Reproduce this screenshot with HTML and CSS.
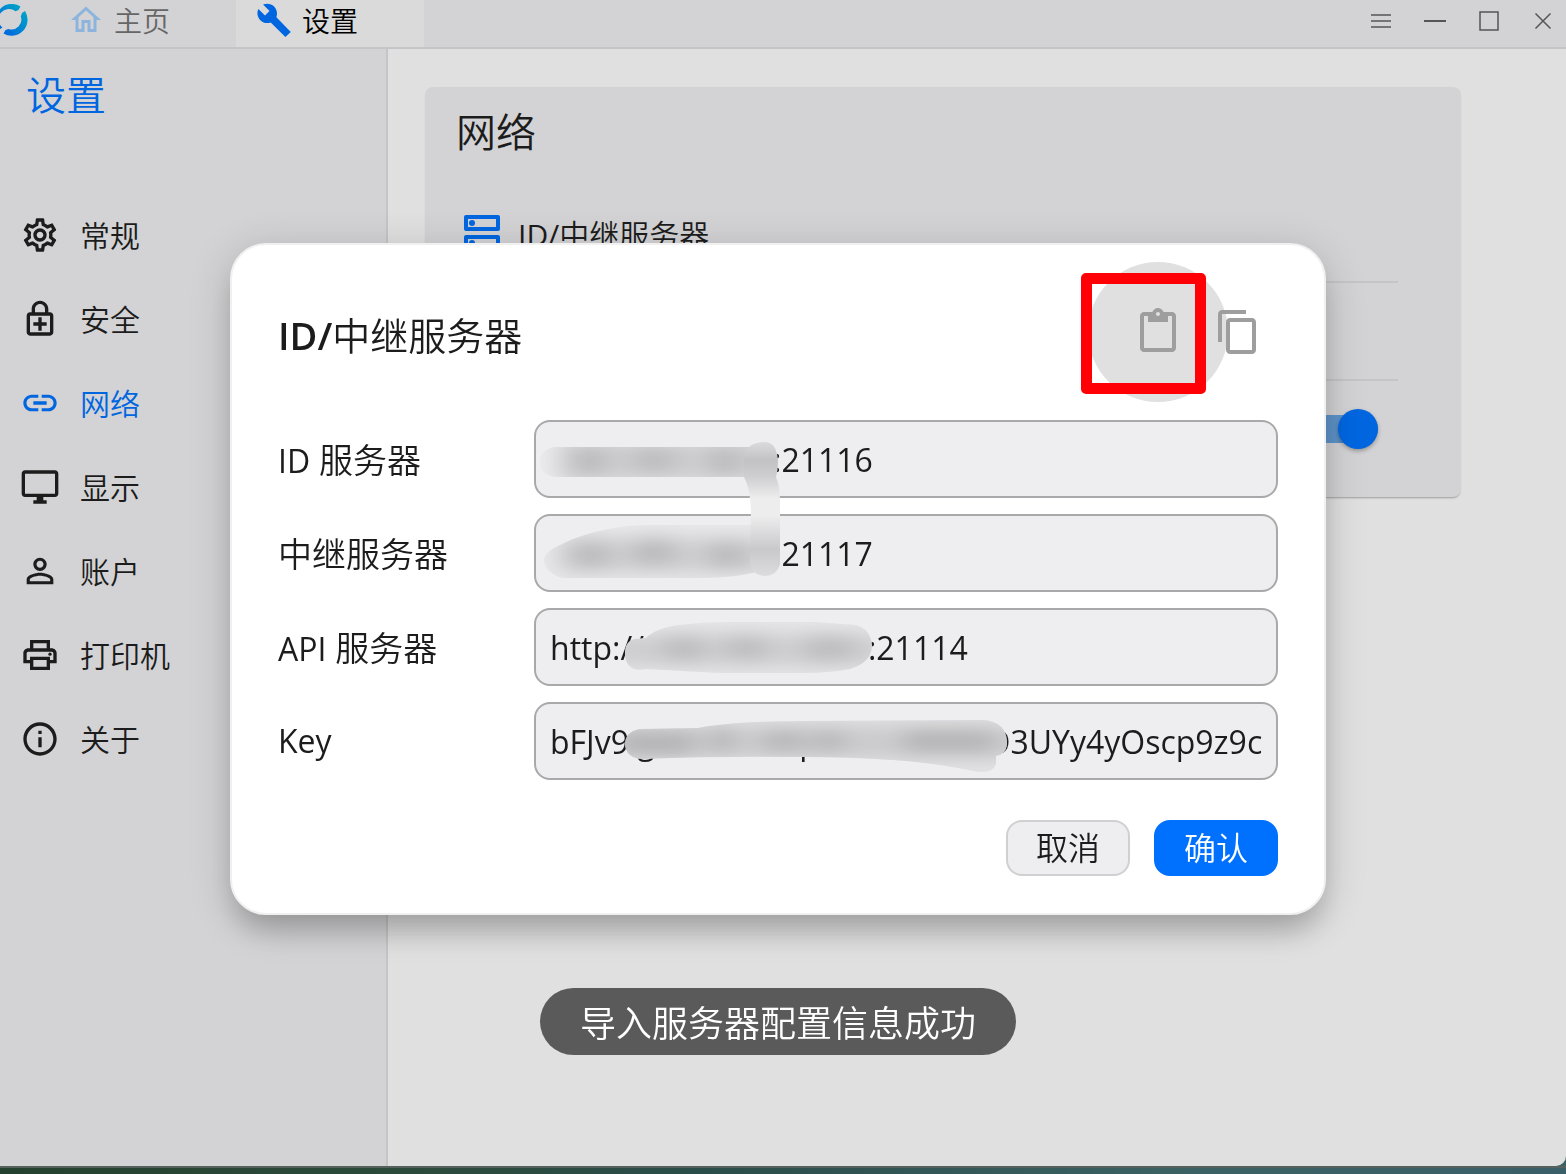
FILE: index.html
```html
<!DOCTYPE html>
<html lang="zh-CN">
<head>
<meta charset="utf-8">
<meta name="viewport" content="width=device-width, initial-scale=1">
<title>设置</title>
<link rel="stylesheet" href="styles.css">
</head>
<body>
<div class="window">
  <header class="titlebar">
    <svg class="logo" viewBox="0 0 32 32" aria-hidden="true">
      <defs>
        <linearGradient id="logoFill" x1="0" y1="1" x2="1" y2="0">
          <stop offset="0.15" stop-color="#0066e0"/>
          <stop offset="0.9" stop-color="#00a8c4"/>
        </linearGradient>
      </defs>
      <path fill="url(#logoFill)" d="M24.500 2.500A16 16 0 0 0 3 25.500L6.500 23.500A9.800 9.800 0 0 1 19.500 7.200L22.500 6ZM29 7A16 16 0 0 1 7.500 29.500L9.500 26L12.500 25A9.800 9.800 0 0 0 24.800 12.500L26 9Z"/>
    </svg>
    <nav class="tabs" aria-label="标签页">
      <a class="tab" href="#home">
        <svg class="tab-icon" viewBox="0 0 24 24"><path d="M12 5.690l5 4.500V18h-2v-6H9v6H7v-7.810l5-4.500M12 3L2 12h3v8h6v-6h2v6h6v-8h3L12 3z"/></svg>
        <span>主页</span>
      </a>
      <a class="tab tab-active" href="#settings">
        <svg class="tab-icon" viewBox="0 0 24 24"><path d="M23.200 20l-9.600-9.800c.9-2.300.4-5.300-1.500-7.200-2-2-5-2.400-7.400-1.300L9 6 6 9 1.600 4.700C.4 7.100.9 10.100 2.900 12.100c1.900 1.900 4.600 2.400 6.900 1.500l9.800 9.800z"/></svg>
        <span>设置</span>
      </a>
    </nav>
    <div class="window-controls">
      <button type="button" aria-label="菜单"><svg viewBox="0 0 22 22"><path d="M1 5h20M1 11h20M1 17h20"/></svg></button>
      <button type="button" aria-label="最小化"><svg viewBox="0 0 22 22"><path stroke-width="2" d="M0 11h22"/></svg></button>
      <button type="button" aria-label="最大化"><svg viewBox="0 0 22 22"><path d="M2 2h18v18H2z"/></svg></button>
      <button type="button" aria-label="关闭"><svg viewBox="0 0 22 22"><path d="M3.500 3.500l15 15M18.500 3.500l-15 15"/></svg></button>
    </div>
  </header>

  <div class="workspace">
    <aside class="sidebar">
      <h1>设置</h1>
      <nav class="menu" aria-label="设置分类">
        <a href="#general"><svg viewBox="0 0 24 24"><path d="M19.430 12.980c.04-.32.07-.64.07-.98 0-.34-.03-.66-.07-.98l2.110-1.650c.19-.15.24-.42.12-.64l-2-3.460c-.09-.16-.26-.25-.44-.25-.06 0-.12.01-.17.03l-2.490 1c-.52-.4-1.080-.73-1.690-.98l-.38-2.650C14.460 2.180 14.250 2 14 2h-4c-.25 0-.46.18-.49.42l-.38 2.650c-.61.25-1.170.59-1.690.98l-2.490-1c-.06-.02-.12-.03-.18-.03-.17 0-.34.09-.43.25l-2 3.460c-.13.22-.07.49.12.64l2.110 1.650c-.04.32-.07.65-.07.98 0 .33.03.66.07.98l-2.110 1.650c-.19.15-.24.42-.12.64l2 3.460c.09.16.26.25.44.25.06 0 .12-.01.17-.03l2.490-1c.52.4 1.080.73 1.690.98l.38 2.650c.03.24.24.42.49.42h4c.25 0 .46-.18.49-.42l.38-2.650c.61-.25 1.170-.59 1.690-.98l2.490 1c.06.02.12.03.18.03.17 0 .34-.09.43-.25l2-3.460c.12-.22.07-.49-.12-.64l-2.110-1.650zm-1.980-1.710c.04.31.05.52.05.73 0 .21-.02.43-.05.73l-.14 1.130.89.7 1.080.84-.7 1.210-1.270-.51-1.040-.42-.9.68c-.43.32-.84.56-1.250.73l-1.060.43-.16 1.130-.2 1.350h-1.400l-.19-1.350-.16-1.130-1.060-.43c-.43-.18-.83-.41-1.230-.71l-.91-.7-1.060.43-1.270.51-.7-1.210 1.080-.84.89-.7-.14-1.130c-.03-.31-.05-.54-.05-.74s.02-.43.05-.73l.14-1.130-.89-.7-1.080-.84.7-1.210 1.270.51 1.040.42.9-.68c.43-.32.84-.56 1.250-.73l1.060-.43.16-1.130.2-1.350h1.390l.19 1.350.16 1.130 1.060.43c.43.18.83.41 1.230.71l.91.7 1.060-.43 1.270-.51.7 1.210-1.070.85-.89.7.14 1.130zM12 8c-2.210 0-4 1.790-4 4s1.790 4 4 4 4-1.790 4-4-1.790-4-4-4zm0 6c-1.100 0-2-.9-2-2s.9-2 2-2 2 .9 2 2-.9 2-2 2z"/></svg><span>常规</span></a>
        <a href="#security"><svg viewBox="0 0 24 24"><path d="M18 8h-1V6c0-2.760-2.240-5-5-5S7 3.240 7 6v2H6c-1.100 0-2 .9-2 2v10c0 1.100.9 2 2 2h12c1.100 0 2-.9 2-2V10c0-1.100-.9-2-2-2zM9 6c0-1.660 1.340-3 3-3s3 1.340 3 3v2H9V6zm9 14H6V10h12v10zM11 19v-3H8v-2h3v-3h2v3h3v2h-3v3z"/></svg><span>安全</span></a>
        <a class="current" href="#network" aria-current="page"><svg viewBox="0 0 24 24"><path d="M3.900 12c0-1.710 1.390-3.100 3.100-3.100h4V7H7c-2.760 0-5 2.240-5 5s2.240 5 5 5h4v-1.900H7c-1.710 0-3.100-1.390-3.100-3.100zM8 13h8v-2H8v2zm9-6h-4v1.900h4c1.710 0 3.100 1.390 3.100 3.100s-1.390 3.100-3.100 3.100h-4V17h4c2.760 0 5-2.240 5-5s-2.240-5-5-5z"/></svg><span>网络</span></a>
        <a href="#display"><svg viewBox="0 0 24 24"><path d="M21 2H3c-1.100 0-2 .9-2 2v12c0 1.100.9 2 2 2h7v2H8v2h8v-2h-2v-2h7c1.100 0 2-.9 2-2V4c0-1.100-.9-2-2-2zm0 14H3V4h18v12z"/></svg><span>显示</span></a>
        <a href="#account"><svg viewBox="0 0 24 24"><path d="M12 5.900c1.160 0 2.100.94 2.100 2.100s-.94 2.100-2.100 2.100S9.900 9.160 9.900 8s.94-2.100 2.100-2.100m0 9c2.970 0 6.100 1.460 6.100 2.100v1.100H5.900V17c0-.64 3.130-2.100 6.100-2.100M12 4C9.790 4 8 5.790 8 8s1.790 4 4 4 4-1.790 4-4-1.790-4-4-4zm0 9c-2.670 0-8 1.340-8 4v3h16v-3c0-2.660-5.330-4-8-4z"/></svg><span>账户</span></a>
        <a href="#printer"><svg viewBox="0 0 24 24"><path d="M19 8h-1V3H6v5H5c-1.660 0-3 1.340-3 3v6h4v4h12v-4h4v-6c0-1.660-1.340-3-3-3zM8 5h8v3H8V5zm8 12v2H8v-4h8v2zm2-2v-2H6v2H4v-4c0-.55.45-1 1-1h14c.55 0 1 .45 1 1v4h-2z"/><circle cx="18" cy="11.500" r="1"/></svg><span>打印机</span></a>
        <a href="#about"><svg viewBox="0 0 24 24"><path d="M11 7h2v2h-2zm0 4h2v6h-2zm1-9C6.480 2 2 6.480 2 12s4.480 10 10 10 10-4.480 10-10S17.520 2 12 2zm0 18c-4.410 0-8-3.590-8-8s3.590-8 8-8 8 3.590 8 8-3.590 8-8 8z"/></svg><span>关于</span></a>
      </nav>
    </aside>

    <main class="content">
      <section class="card">
        <h2>网络</h2>
        <ul class="options">
          <li>
            <svg class="option-icon" viewBox="0 0 24 24"><path fill-rule="evenodd" d="M4 3h16a1 1 0 0 1 1 1v6a1 1 0 0 1-1 1H4a1 1 0 0 1-1-1V4a1 1 0 0 1 1-1zM5 5v4h14V5zM4 13h16a1 1 0 0 1 1 1v6a1 1 0 0 1-1 1H4a1 1 0 0 1-1-1v-6a1 1 0 0 1 1-1zM5 15v4h14v-4z"/><circle cx="7" cy="7" r="1.500"/><circle cx="7" cy="17" r="1.500"/></svg>
            <span><span class="latin">ID/</span>中继服务器</span>
          </li>
          <li></li>
          <li><input class="switch" type="checkbox" role="switch" aria-label="启用" checked></li>
        </ul>
      </section>
    </main>
  </div>
</div>
<div class="desktop-edge"></div>

<div class="overlay">
  <form class="dialog" role="dialog" aria-labelledby="dialogTitle">
    <div class="dialog-head">
      <h2 id="dialogTitle"><b>ID/</b>中继服务器</h2>
      <div class="dialog-tools">
        <button class="tool tool-pressed" type="button" aria-label="粘贴">
          <svg viewBox="0 0 24 24"><path d="M19 2h-4.180C14.400.84 13.300 0 12 0c-1.300 0-2.400.84-2.820 2H5c-1.100 0-2 .9-2 2v16c0 1.100.9 2 2 2h14c1.100 0 2-.9 2-2V4c0-1.100-.9-2-2-2zm-7 0c.55 0 1 .45 1 1s-.45 1-1 1-1-.45-1-1 .45-1 1-1zm7 18H5V4h2v3h10V4h2v16z"/></svg>
          <span class="marker"></span>
        </button>
        <button class="tool" type="button" aria-label="复制">
          <svg viewBox="0 0 24 24"><path d="M16 1H4c-1.100 0-2 .9-2 2v14h2V3h12V1zm3 4H8c-1.100 0-2 .9-2 2v14c0 1.100.9 2 2 2h11c1.100 0 2-.9 2-2V7c0-1.100-.9-2-2-2zm0 16H8V7h11v14z"/></svg>
        </button>
      </div>
    </div>

    <div class="fields">
      <label for="idServer"><span class="latin">ID</span> 服务器</label>
      <input class="host-hidden" id="idServer" type="text" value=":21116">
      <label for="relayServer">中继服务器</label>
      <input class="host-hidden" id="relayServer" type="text" value=":21117">
      <label for="apiServer"><span class="latin">API</span> 服务器</label>
      <input id="apiServer" type="text" value="http://&#8195;&#8195;&#8195;&#8195;&#8195;&#8195;&#8195;:21114">
      <label for="key"><span class="latin">Key</span></label>
      <input id="key" type="text" value="bFJv9 g&#8195;&#8195;&#8195;&#8195;  p&#8195;&#8195;&#8195;&#8195;&#8195; D3UYy4yOscp9z9c">
      <svg class="redaction" viewBox="0 0 744 360" aria-hidden="true">
        <defs>
          <filter id="soft" x="-30%" y="-60%" width="160%" height="220%"><feGaussianBlur stdDeviation="12 9"/></filter>
          <linearGradient id="bridge" x1="0" y1="0" x2="0" y2="1">
            <stop offset="0" stop-color="#dadadc"/><stop offset="0.14" stop-color="#c2c2c4"/><stop offset="0.26" stop-color="#cfcfd1"/>
            <stop offset="0.42" stop-color="#ededee"/><stop offset="0.55" stop-color="#ededee"/><stop offset="0.8" stop-color="#c9c9cb"/><stop offset="1" stop-color="#dcdcde"/>
          </linearGradient>
          <clipPath id="c1"><path d="M20 27H216V57H20Q6 54 6 42T20 27Z"/></clipPath>
          <clipPath id="c2"><path d="M10 140Q10 133 22 127Q60 107 110 105H225V151Q205 158 160 158H28Q10 152 10 140Z"/></clipPath>
          <clipPath id="c3"><path d="M91 234Q91 221 101 219L112 218Q122 208 145 205Q170 202 200 202H280L322 205Q337 209 338 226Q337 243 316 249Q295 253 270 253H185L112 249Q92 253 91 234Z"/></clipPath>
          <clipPath id="c4"><path d="M91 324Q92 310 108 309L164 308Q200 301 270 301L450 300Q472 302 473 322Q473 334 462 336V344Q458 356 434 350Q370 337 270 337Q180 336 108 339Q92 338 91 324Z"/></clipPath>
        </defs>
        <g clip-path="url(#c1)"><path fill="#ebebed" d="M0 20h230v45H0z"/><g filter="url(#soft)"><path fill="#cdcdcf" d="M24 20h226v42H24z"/><path fill="#bababc" d="M40 28h32v26H40zM100 30h40v20h-40zM176 28h30v26h-30z"/></g></g>
        <g clip-path="url(#c2)"><path fill="#e8e8ea" d="M0 100h230v60H0z"/><g filter="url(#soft)"><path fill="#cdcdcf" d="M24 118h226v34H24z"/><path fill="#b9b9bb" d="M40 122h34v26H40zM100 118h40v26h-40zM176 122h34v26h-34z"/></g></g>
        <path fill="url(#bridge)" d="M216 26Q222 22 232 22Q243 23 244 42Q244 50 242 57Q246 66 246 82V144Q243 156 230 156Q216 154 216 142L217 90Q216 68 210 57V34Z"/>
        <g clip-path="url(#c3)"><path fill="#e6e6e8" d="M85 200h260v56H85z"/><g filter="url(#soft)"><path fill="#cdcdcf" d="M70 214h280v32H70z"/><path fill="#bbbbbd" d="M130 216h40v24h-40zM192 216h40v22h-40zM272 216h46v24h-46z"/></g></g>
        <g clip-path="url(#c4)"><path fill="#e2e2e4" d="M85 296h400v60H85z"/><g filter="url(#soft)"><path fill="#cacacc" d="M60 306h430v32H60z"/><path fill="#b2b2b4" d="M86 312h74v24H86zM178 308h20v24h-20zM230 312h40v18h-40zM280 312h30v18h-30zM370 310h90v22h-90z"/></g></g>
      </svg>
    </div>

    <div class="actions">
      <button class="btn" type="button">取消</button>
      <button class="btn btn-primary" type="submit">确认</button>
    </div>
  </form>
  <div class="toast" role="status">导入服务器配置信息成功</div>
</div>
</body>
</html>
```
FILE: styles.css
```css
:root {
  --blue: #0066e0;
  --ink: #1c1c1c;
  --panel: #d3d3d5;
  --line: #c5c5c7;
}

* {
  box-sizing: border-box;
}

body {
  margin: 0;
  min-height: 100vh;
  display: flex;
  flex-direction: column;
  background: #3c6163;
  color: var(--ink);
  font-family: "Open Sans", "Noto Sans CJK SC", sans-serif;
  font-weight: 350;
}

h1,
h2 {
  margin: 0;
  font-weight: 350;
}

a {
  color: inherit;
  text-decoration: none;
}

button,
input {
  font: inherit;
  color: inherit;
}

svg {
  display: block;
  flex: none;
  fill: currentColor;
}

.latin {
  font-weight: 400;
}

.window {
  flex: 1;
  display: flex;
  flex-direction: column;
  background: #e0e0e0;
  border-bottom-right-radius: 10px;
}

/* Title bar */

.titlebar {
  display: flex;
  height: 49px;
  background: var(--panel);
  border-bottom: 2px solid var(--line);
}

.logo {
  width: 32px;
  height: 32px;
  margin: 4px 0 0 -4px;
}

.tabs {
  display: flex;
  margin-left: 20px;
}

.tab {
  display: flex;
  gap: 10px;
  width: 188px;
  padding: 0 20px;
  color: #666;
  font-size: 28px;
  line-height: 42px;
}

.tab-icon {
  width: 36px;
  height: 36px;
  margin-top: 2px;
  color: #8db4dc;
}

.tab-active {
  background: #dadada;
  color: #000;
}

.tab-active .tab-icon {
  color: var(--blue);
}

.window-controls {
  display: flex;
  gap: 32px;
  margin-left: auto;
  padding: 10px 12px 0 0;
}

.window-controls button {
  width: 22px;
  height: 22px;
  padding: 0;
  border: 0;
  background: none;
}

.window-controls svg {
  fill: none;
  stroke: #555;
  stroke-width: 1.500;
}

/* Sidebar */

.workspace {
  flex: 1;
  display: flex;
}

.sidebar {
  flex: none;
  width: 388px;
  background: var(--panel);
  border-right: 2px solid var(--line);
}

.sidebar h1 {
  padding: 16px 26px 0;
  color: var(--blue);
  font-size: 40px;
  line-height: 60px;
}

.menu {
  display: flex;
  flex-direction: column;
  margin-top: 68px;
}

.menu a {
  display: flex;
  align-items: center;
  gap: 20px;
  height: 84px;
  padding-left: 20px;
  font-size: 30px;
}

.menu span {
  padding-bottom: 2px;
}

.menu svg {
  width: 40px;
  height: 40px;
}

.menu .current {
  color: var(--blue);
}

/* Network card */

.content {
  flex: 1;
  padding: 38px 105px 0 37px;
}

.card {
  max-width: 1036px;
  height: 410px;
  padding: 15px 31px 0;
  background: var(--panel);
  border-radius: 8px;
  box-shadow: 0 2px 2px -1px rgba(0, 0, 0, 0.3);
}

.card h2 {
  font-size: 40px;
  line-height: 60px;
}

.options {
  margin: 23px 32px 0 0;
  padding: 0;
  list-style: none;
}

.options li {
  display: flex;
  align-items: center;
  gap: 12px;
  height: 98px;
  padding-left: 2px;
  border-bottom: 2px solid var(--line);
  font-size: 30px;
}

.options li:last-child {
  height: 96px;
  border-bottom: 0;
}

.option-icon {
  width: 48px;
  height: 48px;
  color: var(--blue);
}

.switch {
  appearance: none;
  display: flex;
  align-items: center;
  justify-content: flex-end;
  width: 72px;
  height: 28px;
  margin: 0 20px 0 auto;
  border-radius: 14px;
  background: #5f94cb;
}

.switch::before {
  content: "";
  width: 40px;
  height: 40px;
  flex: none;
  border-radius: 50%;
  background: var(--blue);
  box-shadow: 0 2px 4px rgba(0, 0, 0, 0.3);
}

.desktop-edge {
  height: 8px;
  border-top: 2px solid #56615d;
  background: linear-gradient(90deg, #24402f, #2c4a3a 25%, #2a4d49 45%, #3c6163 75%, #3a5f68);
}

/* Dialog */

.overlay {
  position: fixed;
  inset: 0;
  display: grid;
  place-items: center;
  padding: 0 10px 16px 0;
}

.dialog {
  width: 75%;
  min-width: 720px;
  max-width: 1096px;
  padding: 55px 46px 37px;
  border: 2px solid #f0f0f0;
  border-radius: 36px;
  background: #fff;
  box-shadow: 0 22px 30px -8px rgba(0, 0, 0, 0.2), 0 8px 40px 2px rgba(0, 0, 0, 0.16);
}

.dialog-head {
  display: flex;
  align-items: center;
  justify-content: space-between;
  height: 64px;
}

.dialog-head h2 {
  padding-top: 6px;
  font-size: 38px;
  line-height: 64px;
}

.dialog-head b {
  font-weight: 600;
}

.dialog-tools {
  display: flex;
  gap: 32px;
  padding-right: 16px;
}

.tool {
  position: relative;
  width: 48px;
  height: 48px;
  padding: 0;
  border: 0;
  background: none;
  color: #9e9e9e;
}

.tool svg {
  position: relative;
}

.tool-pressed::before {
  content: "";
  position: absolute;
  inset: -46px;
  border-radius: 50%;
  background: #e0e0e0;
}

.marker {
  position: absolute;
  inset: -35px -24px -38px -53px;
  z-index: 1;
  border: 11px solid #ff0006;
  border-radius: 5px;
}

.fields {
  position: relative;
  display: grid;
  grid-template-columns: 240px minmax(0, 1fr);
  gap: 16px;
  align-items: center;
  margin-top: 56px;
}

.fields label {
  padding-bottom: 2px;
  font-size: 34px;
}

.fields .latin {
  font-size: 32px;
}

.fields input {
  width: 100%;
  height: 78px;
  padding: 0 14px;
  border: 2px solid #a9a9ab;
  border-radius: 16px;
  background: #eeeef0;
  font-size: 32px;
  font-weight: 400;
}

.fields .host-hidden {
  padding-left: 237px;
}

.redaction {
  position: absolute;
  top: 0;
  left: 256px;
  width: 744px;
  height: 360px;
  pointer-events: none;
}

.actions {
  display: flex;
  justify-content: flex-end;
  gap: 24px;
  margin-top: 40px;
}

.btn {
  width: 124px;
  height: 56px;
  padding: 0;
  border: 2px solid #d0d0d2;
  border-radius: 16px;
  background: #eeeef0;
  font-size: 32px;
  line-height: 52px;
}

.btn-primary {
  border-color: #0071ff;
  background: #0071ff;
  color: #fff;
}

.toast {
  position: absolute;
  right: 10px;
  bottom: 119px;
  left: 0;
  width: fit-content;
  margin: 0 auto;
  padding: 4px 40px 0;
  border-radius: 34px;
  background: #5a5a5a;
  color: #fff;
  font-size: 36px;
  line-height: 63px;
  white-space: nowrap;
}
```
